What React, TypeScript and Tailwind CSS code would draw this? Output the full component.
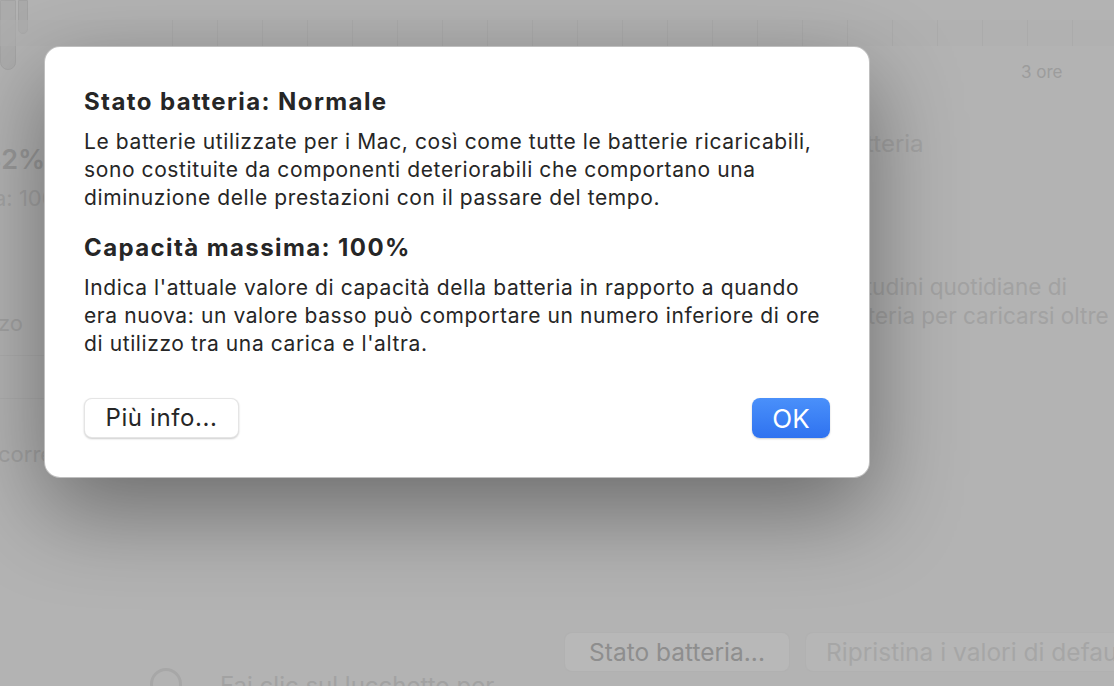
const font = { fontFamily: "Inter, 'Noto Sans', sans-serif" };

function Ticks() {
  const xs = Array.from({ length: 22 }, (_, i) => i);
  return (
    <div className="flex h-[26px] gap-[44px] pl-[172px] bg-[#afafaf]/60">
      {xs.map((i) => (
        <div key={i} className="w-px h-full bg-[#a6a6a6]/60" />
      ))}
    </div>
  );
}

function Dialog() {
  return (
    <div className="absolute left-[44px] top-[46px] w-[826px] h-[432px] rounded-[16px] bg-white border border-black/25 shadow-[0_32px_90px_rgba(0,0,0,0.4)] px-[39px] pt-[41px] pb-[39px] flex flex-col text-[#262626]">
      <h1 className="text-[24px] leading-[28px] font-bold tracking-[1.4px]">Stato batteria: Normale</h1>
      <p className="mt-[12px] text-[21px] leading-[28px] tracking-[0.6px]">
        Le batterie utilizzate per i Mac, così come tutte le batterie ricaricabili,
        <br />
        sono costituite da componenti deteriorabili che comportano una
        <br />
        diminuzione delle prestazioni con il passare del tempo.
      </p>
      <h2 className="mt-[22px] text-[24px] leading-[28px] font-bold tracking-[1.4px]">Capacità massima: 100%</h2>
      <p className="mt-[12px] text-[21px] leading-[28px] tracking-[0.6px]">
        Indica l'attuale valore di capacità della batteria in rapporto a quando
        <br />
        era nuova: un valore basso può comportare un numero inferiore di ore
        <br />
        di utilizzo tra una carica e l'altra.
      </p>
      <div className="mt-auto flex items-center justify-between">
        <button className="w-[155px] h-[40px] rounded-[8px] bg-white border border-black/10 shadow-[0_1px_2px_rgba(0,0,0,0.2)] text-[24px] tracking-[0.6px] text-[#262626]">
          Più info...
        </button>
        <button className="w-[78px] h-[40px] rounded-[8px] bg-gradient-to-b from-[#4a90fa] to-[#2f72f0] shadow-[0_1px_2px_rgba(0,0,0,0.2)] text-[26px] text-white">
          OK
        </button>
      </div>
    </div>
  );
}

export default function App() {
  return (
    <div style={font} className="relative w-[1114px] h-[686px] overflow-hidden bg-[#b3b3b3] text-[#9c9c9c] whitespace-nowrap">
      {/* dimmed window behind the sheet */}
      <div className="flex h-[60px]">
        <div className="w-[30px] h-[70px] flex shrink-0">
          <div className="w-[16px] h-[70px] rounded-b-[8px] bg-[#acacac] border border-[#a4a4a4]" />
          <div className="ml-[2px] w-[10px] h-[34px] rounded-b-[5px] bg-[#aaaaaa] border border-[#a2a2a2]" />
        </div>
        <div className="pt-[20px] -ml-[30px]">
          <Ticks />
        </div>
      </div>

      <div className="flex h-[572px] overflow-hidden">
        <div className="w-[44px] shrink-0 overflow-hidden">
          <div className="mt-[85px] -ml-[16px] text-[27px] leading-[30px] font-semibold text-[#9a9a9a]">82%</div>
          <div className="mt-[8px] -ml-[6px] text-[22px] leading-[30px] text-[#a4a4a4]">a: 100%</div>
          <div className="mt-[95px] -ml-[2px] text-[22px] leading-[30px] text-[#a2a2a2]">zo</div>
          <div className="mt-[17px] h-px bg-[#adadad]" />
          <div className="h-[42px]" />
          <div className="h-px bg-[#adadad]" />
          <div className="mt-[40px] -ml-[2px] text-[22px] leading-[30px] text-[#a2a2a2]">corre</div>
        </div>
        <div className="w-[826px] shrink-0" />
        <div className="flex-1 overflow-hidden">
          <div className="pl-[151px] text-[17px] leading-[24px] text-[#9c9c9c]">3 ore</div>
          <div className="-ml-[98px] mt-[46px] text-[24px] leading-[28px] text-[#a4a4a4]">Stato batteria</div>
          <div className="-ml-[40px] mt-[114px] text-[22.5px] leading-[29px] text-[#a2a2a2]">Abitudini quotidiane di</div>
          <div className="-ml-[60px] text-[22.5px] leading-[29px] text-[#a2a2a2]">la batteria per caricarsi oltre la</div>
        </div>
      </div>

      <div className="flex pl-[564px] gap-[15px]">
        <div className="h-[40px] w-[226px] shrink-0 rounded-[8px] bg-[#b8b8b8] border border-[#ababab]/60 flex items-center justify-center text-[24.5px] text-[#8e8e8e]">
          Stato batteria...
        </div>
        <div className="h-[40px] w-[340px] shrink-0 rounded-[8px] bg-[#b6b6b6] border border-[#adadad]/60 flex items-center pl-[20px] text-[24.5px] text-[#a6a6a6]">
          Ripristina i valori di default
        </div>
      </div>
      <div className="-mt-[4px] flex items-start gap-[38px] pl-[150px]">
        <div className="w-[32px] h-[32px] shrink-0 rounded-full border-[3px] border-[#a7a7a7]" />
        <div className="mt-[4px] text-[24px] leading-[28px] text-[#a2a2a2]">Fai clic sul lucchetto per</div>
      </div>

      <Dialog />
    </div>
  );
}
